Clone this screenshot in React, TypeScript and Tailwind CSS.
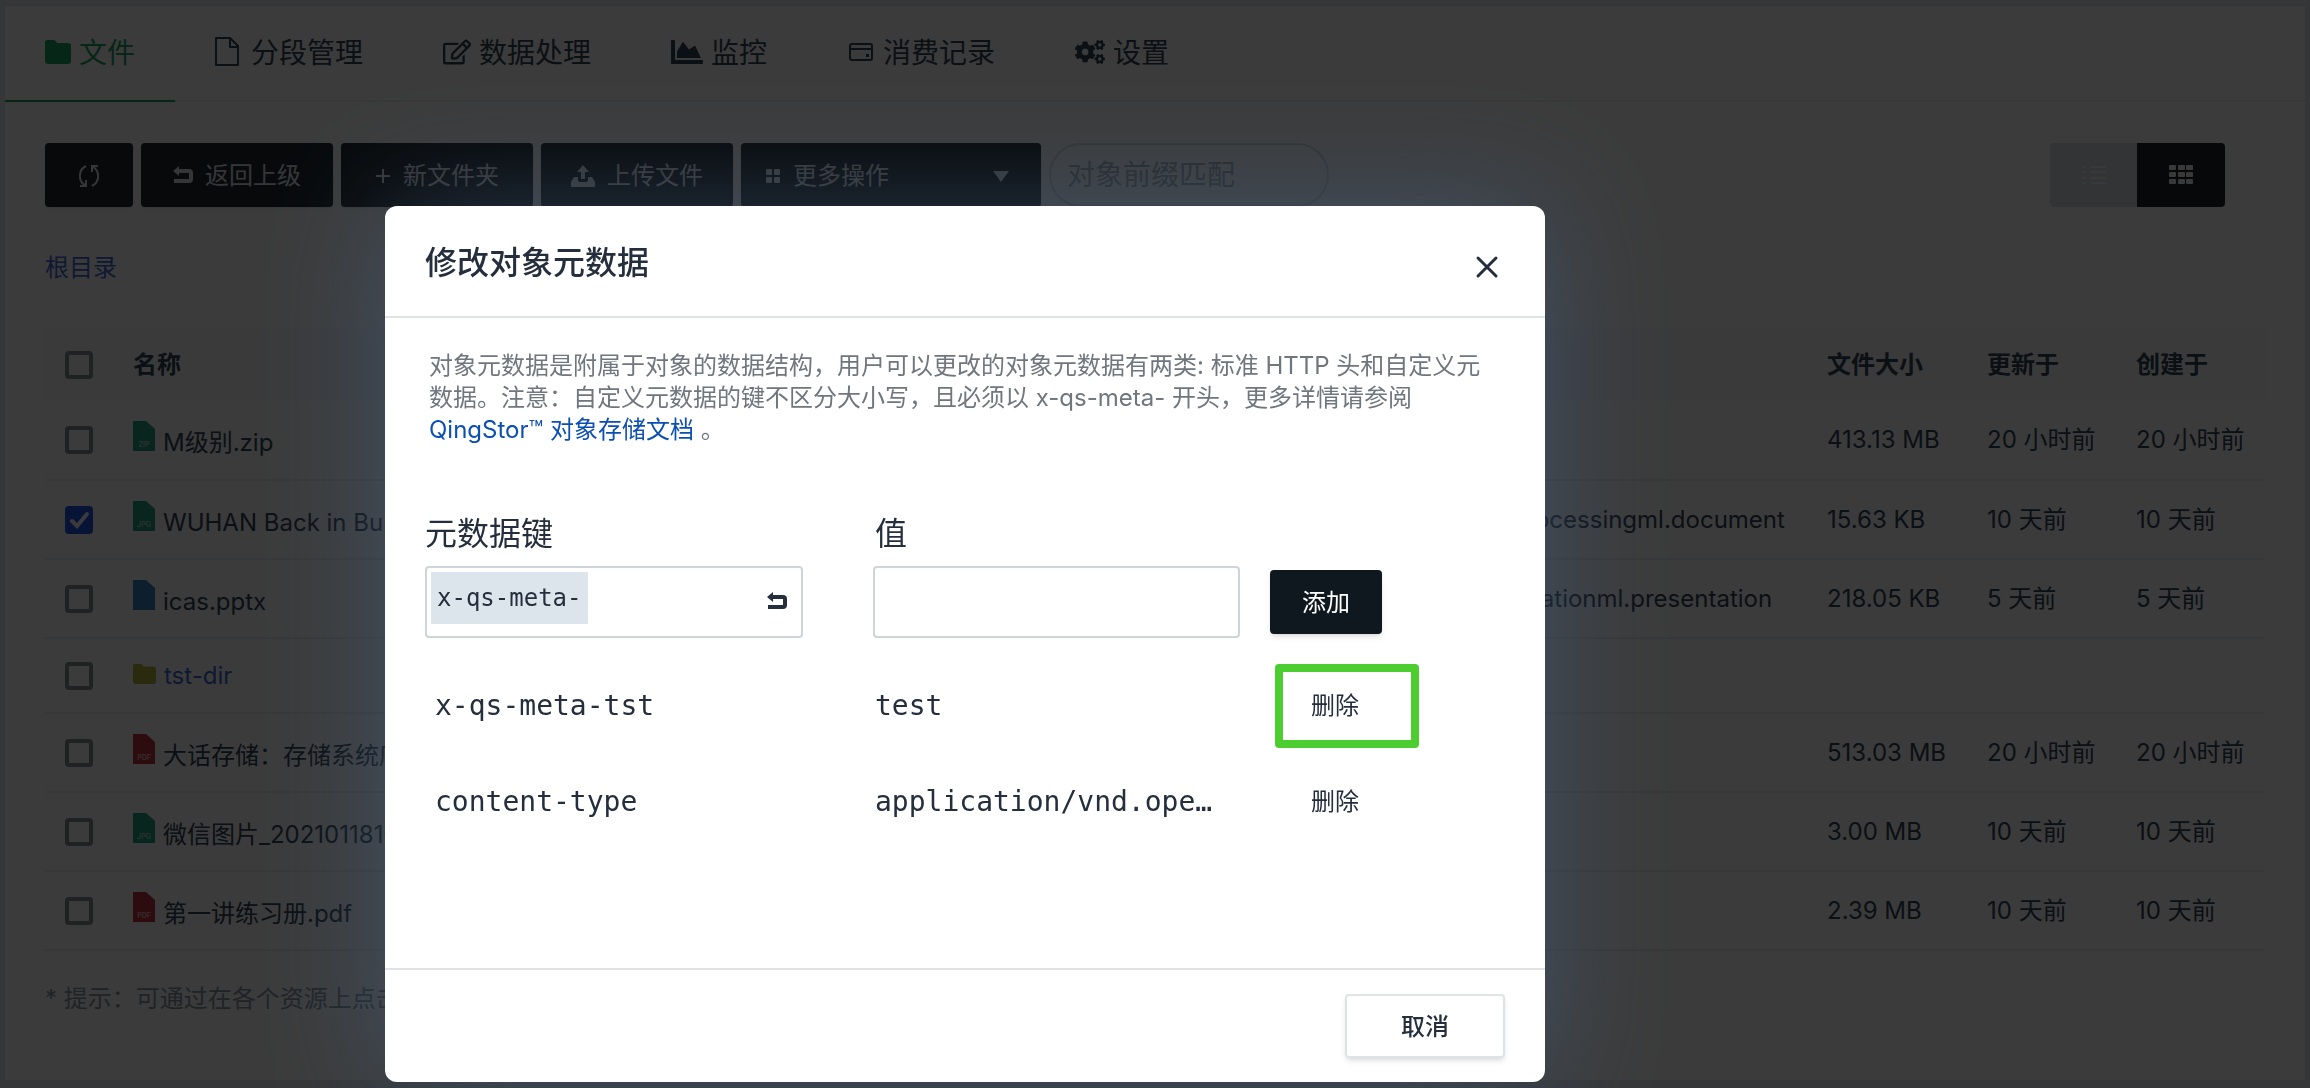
import React from 'react';
import { FaChartArea, FaCogs, FaRegEdit } from 'react-icons/fa';

type FileRow = {
  name: string;
  kind: 'zip' | 'jpg' | 'ppt' | 'dir' | 'pdf';
  type?: string;
  size?: string;
  updated?: string;
  created?: string;
  checked?: boolean;
};

const files: FileRow[] = [
  { name: 'M级别.zip', kind: 'zip', size: '413.13 MB', updated: '20 小时前', created: '20 小时前' },
  {
    name: 'WUHAN Back in Business',
    kind: 'jpg',
    type: 'openxmlformats-officedocument.wordprocessingml.document',
    size: '15.63 KB',
    updated: '10 天前',
    created: '10 天前',
    checked: true,
  },
  {
    name: 'icas.pptx',
    kind: 'ppt',
    type: 'openxmlformats-officedocument.presentationml.presentation',
    size: '218.05 KB',
    updated: '5 天前',
    created: '5 天前',
  },
  { name: 'tst-dir', kind: 'dir' },
  { name: '大话存储：存储系统底层', kind: 'pdf', size: '513.03 MB', updated: '20 小时前', created: '20 小时前' },
  { name: '微信图片_20210118101530', kind: 'jpg', size: '3.00 MB', updated: '10 天前', created: '10 天前' },
  { name: '第一讲练习册.pdf', kind: 'pdf', size: '2.39 MB', updated: '10 天前', created: '10 天前' },
];

const metadata = [
  { key: 'x-qs-meta-tst', value: 'test', highlighted: true },
  { key: 'content-type', value: 'application/vnd.ope…', highlighted: false },
];

export default function App() {
  return (
    <div className="min-h-screen flex flex-col bg-[#e3e8ee] px-[5px] pt-1.5 pb-2 text-2xl text-[#324558] font-['Inter','Noto_Sans_CJK_SC',sans-serif]">
      <main className="flex-1 bg-white">
        <Tabs />
        <Toolbar />
        <div className="pl-10 pt-[43px] leading-9">
          <a href="#" className="text-[#3f6ad8]">根目录</a>
        </div>
        <FileTable />
        <p className="pl-10 pt-[30px] leading-9 text-[#8c96a3] whitespace-nowrap">
          * 提示：可通过在各个资源上点击「右键」来进行常用操作，以及「双击」来修改基本属性。
        </p>
      </main>
      <div className="fixed inset-0 overflow-hidden bg-black/77 pt-[206px] pl-[calc(100%/6)]">
        <MetadataDialog />
      </div>
    </div>
  );
}

function Tabs() {
  return (
    <nav className="flex h-24 border-b-2 border-[#e8ecf0]">
      <Tab active label="文件" icon={<FolderIcon className="w-[26px] h-6 mb-1" />} />
      <Tab label="分段管理" icon={<FileOutlineIcon />} />
      <Tab label="数据处理" icon={<FaRegEdit className="w-7 h-7 mb-1" />} />
      <Tab label="监控" icon={<FaChartArea className="w-8 h-8 mb-1" />} />
      <Tab label="消费记录" icon={<WalletIcon />} />
      <Tab label="设置" icon={<FaCogs className="w-[30px] h-8 mb-1" />} />
    </nav>
  );
}

function Tab({ icon, label, active = false }: { icon: React.ReactNode; label: string; active?: boolean }) {
  return (
    <a
      href="#"
      className={`flex items-center gap-2 px-10 h-24 pt-0.5 text-[28px] whitespace-nowrap border-b-2 ${
        active ? 'text-[#1da566] border-[#1da566]' : 'border-transparent'
      }`}
    >
      {icon}
      {label}
    </a>
  );
}

function Toolbar() {
  return (
    <div className="flex items-center justify-between pl-10 pr-20 pt-[41px]">
      <div className="flex gap-2">
        <ToolButton className="w-[88px] justify-center" icon={<RefreshIcon />} title="刷新" />
        <ToolButton className="w-48 justify-center" icon={<ReturnIcon className="w-5 h-5" />} label="返回上级" />
        <ToolButton className="w-48 justify-center" icon={<PlusIcon />} label="新文件夹" />
        <ToolButton className="w-48 justify-center" icon={<UploadIcon />} label="上传文件" />
        <ToolButton className="w-[300px] px-6" icon={<DotsIcon />} label="更多操作" caret />
        <input
          aria-label="对象前缀匹配"
          placeholder="对象前缀匹配"
          className="w-[280px] h-16 px-4 text-[28px] rounded-full border-2 border-[#d5dbe3] placeholder:text-[#a4adb8]"
        />
      </div>
      <div className="flex">
        <button title="列表" className="w-[87px] h-16 flex items-center justify-center rounded-l bg-[#dce2e8] text-[#f5f7fa]">
          <ListIcon />
        </button>
        <button title="网格" className="w-[88px] h-16 flex items-center justify-center rounded-r bg-[#1c252e] text-[#f5f7fa]">
          <GridIcon />
        </button>
      </div>
    </div>
  );
}

function ToolButton({ icon, label, title, className, caret = false }: {
  icon: React.ReactNode;
  label?: string;
  title?: string;
  className: string;
  caret?: boolean;
}) {
  return (
    <button title={title} className={`h-16 flex items-center gap-3 pt-0.5 rounded bg-[#202931] text-[#e4e8ec] shadow ${className}`}>
      {icon}
      {label}
      {caret && (
        <svg viewBox="0 0 16 12" className="ml-auto mr-2 w-4 h-3" fill="currentColor">
          <path d="M0 1h16L8 12z" />
        </svg>
      )}
    </button>
  );
}

function FileTable() {
  return (
    <div className="px-10 pt-[42px]">
      <table className="w-full table-fixed text-left whitespace-nowrap">
        <colgroup>
          <col className="w-[88px]" />
          <col />
          <col className="w-[753px]" />
          <col className="w-40" />
          <col className="w-[149px]" />
          <col className="w-[129px]" />
        </colgroup>
        <thead>
          <tr className="h-[73px] bg-[#f8f9fc]">
            <th className="pl-5"><Checkbox label="全选" /></th>
            <th className="font-bold">名称</th>
            <th className="font-bold">类型</th>
            <th className="font-bold">文件大小</th>
            <th className="font-bold">更新于</th>
            <th className="font-bold">创建于</th>
          </tr>
        </thead>
        <tbody>
          {files.map((file) => (
            <tr key={file.name} className={`border-b-2 border-[#e8ecf0] ${file.kind === 'dir' ? 'h-[75px]' : 'h-[79px]'}`}>
              <td className="pl-5"><Checkbox label={file.name} checked={file.checked} /></td>
              <td>
                <a href="#" className={`flex items-center gap-2 ${file.kind === 'dir' ? 'text-[#3f6ad8]' : ''}`}>
                  {file.kind === 'dir' ? <FolderIcon className="w-[23px] h-5 shrink-0 mb-1 text-[#b5bb3c]" /> : <FileIcon kind={file.kind} />}
                  <span className={file.kind === 'dir' ? '' : 'pt-1.5'}>{file.name}</span>
                </a>
              </td>
              <td>{file.type}</td>
              <td>{file.size}</td>
              <td>{file.updated}</td>
              <td>{file.created}</td>
            </tr>
          ))}
        </tbody>
      </table>
    </div>
  );
}

function Checkbox({ label, checked = false }: { label: string; checked?: boolean }) {
  return (
    <span className="relative block w-7 h-7">
      <input
        type="checkbox"
        aria-label={label}
        defaultChecked={checked}
        className="peer block w-7 h-7 appearance-none rounded border-4 border-[#8c8f98] checked:border-[#1f56e8] checked:bg-[#1f56e8]"
      />
      <svg viewBox="0 0 28 28" className="absolute inset-0 hidden peer-checked:block pointer-events-none" fill="none" stroke="white" strokeWidth="4" strokeLinecap="round">
        <path d="M7 15l5 5L22 8" />
      </svg>
    </span>
  );
}

function MetadataDialog() {
  return (
    <div
      role="dialog"
      aria-labelledby="dialog-title"
      className="w-[1160px] rounded-xl bg-white text-[#242e3c] shadow-[0_0_120px_rgba(72,98,130,0.6)]"
    >
      <div className="flex items-center justify-between h-28 pt-1 pl-10 pr-[46px] border-b-2 border-[#dfe3e6]">
        <h2 id="dialog-title" className="text-[32px] font-medium">修改对象元数据</h2>
        <button title="关闭" className="pt-2">
          <svg viewBox="0 0 24 24" className="w-6 h-6" fill="none" stroke="currentColor" strokeWidth="3" strokeLinecap="round">
            <path d="M3 3l18 18M21 3L3 21" />
          </svg>
        </button>
      </div>
      <div className="px-10 pt-8 pb-[118px]">
        <p className="max-w-[1060px] ml-1 leading-8 text-[#70767d]">
          对象元数据是附属于对象的数据结构，用户可以更改的对象元数据有两类: 标准 HTTP 头和自定义元数据。注意：自定义元数据的键不区分大小写，且必须以 x-qs-meta- 开头，更多详情请参阅{' '}
          <a href="#" className="text-[#0b4fb3]">QingStor™ 对象存储文档</a> 。
        </p>
        <div className="flex mt-16 text-[32px] leading-12">
          <label htmlFor="meta-key" className="w-[450px]">元数据键</label>
          <label htmlFor="meta-value">值</label>
        </div>
        <div className="flex items-center mt-2">
          <div className="flex items-start w-[378px] h-18 p-1 pr-3.5 rounded border-2 border-[#cfd3da]">
            <span className="h-[52px] px-1.5 leading-13 bg-[#dde5ec] font-['DejaVu_Sans_Mono',monospace]">x-qs-meta-</span>
            <input id="meta-key" className="flex-1 min-w-0 h-[52px] outline-none" />
            <button title="重置" className="self-center"><ReturnIcon className="w-5 h-5" /></button>
          </div>
          <input id="meta-value" className="w-[367px] h-18 ml-[70px] px-3 rounded border-2 border-[#cfd3da] outline-none" />
          <button className="w-28 h-16 ml-[30px] pt-0.5 rounded bg-[#10181f] text-white shadow-md">添加</button>
        </div>
        <div className="mt-5">
          {metadata.map((item) => (
            <div key={item.key} className="flex items-center h-24 text-[28px] font-['DejaVu_Sans_Mono',monospace]">
              <span className="w-[450px] pl-2.5">{item.key}</span>
              <span className="w-[404px]">{item.value}</span>
              <button className="relative w-28 h-16 text-2xl font-['Inter','Noto_Sans_CJK_SC',sans-serif]">
                删除
                {item.highlighted && (
                  <span className="absolute -top-2.5 -bottom-2.5 -left-1 -right-7 rounded border-8 border-[#4cce30]" />
                )}
              </button>
            </div>
          ))}
        </div>
      </div>
      <div className="flex justify-end px-10 py-6 border-t-2 border-[#dfe3e6]">
        <button className="w-40 h-16 pt-0.5 rounded-sm border-2 border-[#dfe3e6] font-medium shadow-md">取消</button>
      </div>
    </div>
  );
}

function FolderIcon({ className }: { className: string }) {
  return (
    <svg viewBox="0 0 26 24" className={className} fill="currentColor" preserveAspectRatio="none">
      <path d="M2 0h7c2 0 2 3 4 3h10c2 0 3 1 3 3v15c0 2-1 3-3 3H3c-2 0-3-1-3-3V2c0-1 1-2 2-2z" />
    </svg>
  );
}

const fileColors = { zip: '#24a284', jpg: '#24a284', ppt: '#3a84c4', pdf: '#c23646' };

function FileIcon({ kind }: { kind: 'zip' | 'jpg' | 'ppt' | 'pdf' }) {
  return (
    <svg viewBox="0 0 22 30" className="w-[22px] h-[30px] shrink-0 mb-2">
      <path d="M0 0h13l9 8v22H0z" fill={fileColors[kind]} />
      {kind !== 'ppt' && (
        <text x="11" y="26" fontSize="7" fontWeight="700" textAnchor="middle" fill="#fff" fillOpacity="0.6">
          {kind.toUpperCase()}
        </text>
      )}
    </svg>
  );
}

function FileOutlineIcon() {
  return (
    <svg viewBox="0 0 28 30" className="w-7 h-[30px] mb-1" fill="none" stroke="currentColor" strokeWidth="2" strokeLinejoin="round">
      <path d="M1 1h14l8 8v19H1z" />
      <path d="M15 1v9h8" />
    </svg>
  );
}

function WalletIcon() {
  return (
    <svg viewBox="0 0 28 24" className="w-7 h-6 mb-1" fill="none" stroke="currentColor" strokeWidth="2">
      <rect x="3" y="4" width="22" height="16" rx="2" />
      <path d="M3 9h22" />
      <rect x="19" y="14" width="3" height="3" fill="currentColor" stroke="none" />
    </svg>
  );
}

function ReturnIcon({ className }: { className: string }) {
  return (
    <svg viewBox="0 0 20 20" className={className} fill="none" stroke="currentColor" strokeWidth="4">
      <path d="M4 5h12q2 0 2 2v6q0 2-2 2H1" />
      <path d="M0 5l6-5v10z" fill="currentColor" stroke="none" />
    </svg>
  );
}

function RefreshIcon() {
  return (
    <svg viewBox="0 0 20 24" className="w-5 h-6" fill="none" stroke="currentColor" strokeWidth="2">
      <path d="M7 2C-1 6-1 17 6 21M13 22c8-4 8-15 1-19" />
      <path d="M1 22h6v-6M19 2h-6v6" />
    </svg>
  );
}

function PlusIcon() {
  return (
    <svg viewBox="0 0 16 16" className="w-4 h-4" stroke="currentColor" strokeWidth="2">
      <path d="M8 1v14M1 8h14" />
    </svg>
  );
}

function UploadIcon() {
  return (
    <svg viewBox="0 0 24 22" className="w-6 h-[22px]" fill="currentColor">
      <path d="M12 0l6 7h-4v7h-4V7H6z" />
      <path d="M3 12h4v3q0 2 2 2h6q2 0 2-2v-3h4l3 5v4q0 1-1 1H1q-1 0-1-1v-4z" />
    </svg>
  );
}

function DotsIcon() {
  return (
    <svg viewBox="0 0 16 16" className="w-4 h-4" fill="currentColor">
      <rect x="1" y="1" width="6" height="6" rx="1" />
      <rect x="9" y="1" width="6" height="6" rx="1" />
      <rect x="1" y="9" width="6" height="6" rx="1" />
      <rect x="9" y="9" width="6" height="6" rx="1" />
    </svg>
  );
}

function ListIcon() {
  return (
    <svg viewBox="0 0 24 20" className="w-6 h-5" fill="currentColor">
      <path d="M0 1h4v2H0zM8 1h16v2H8zM0 6h4v2H0zM8 6h16v2H8zM0 12h4v2H0zM8 12h16v2H8zM0 17h4v2H0zM8 17h16v2H8z" />
    </svg>
  );
}

function GridIcon() {
  return (
    <svg viewBox="0 0 24 20" className="w-6 h-5" fill="currentColor">
      {[0, 7, 14].map((y) =>
        [0, 9, 17].map((x) => <rect key={`${x}-${y}`} x={x} y={y} width="7" height="5" rx="1" />)
      )}
    </svg>
  );
}
